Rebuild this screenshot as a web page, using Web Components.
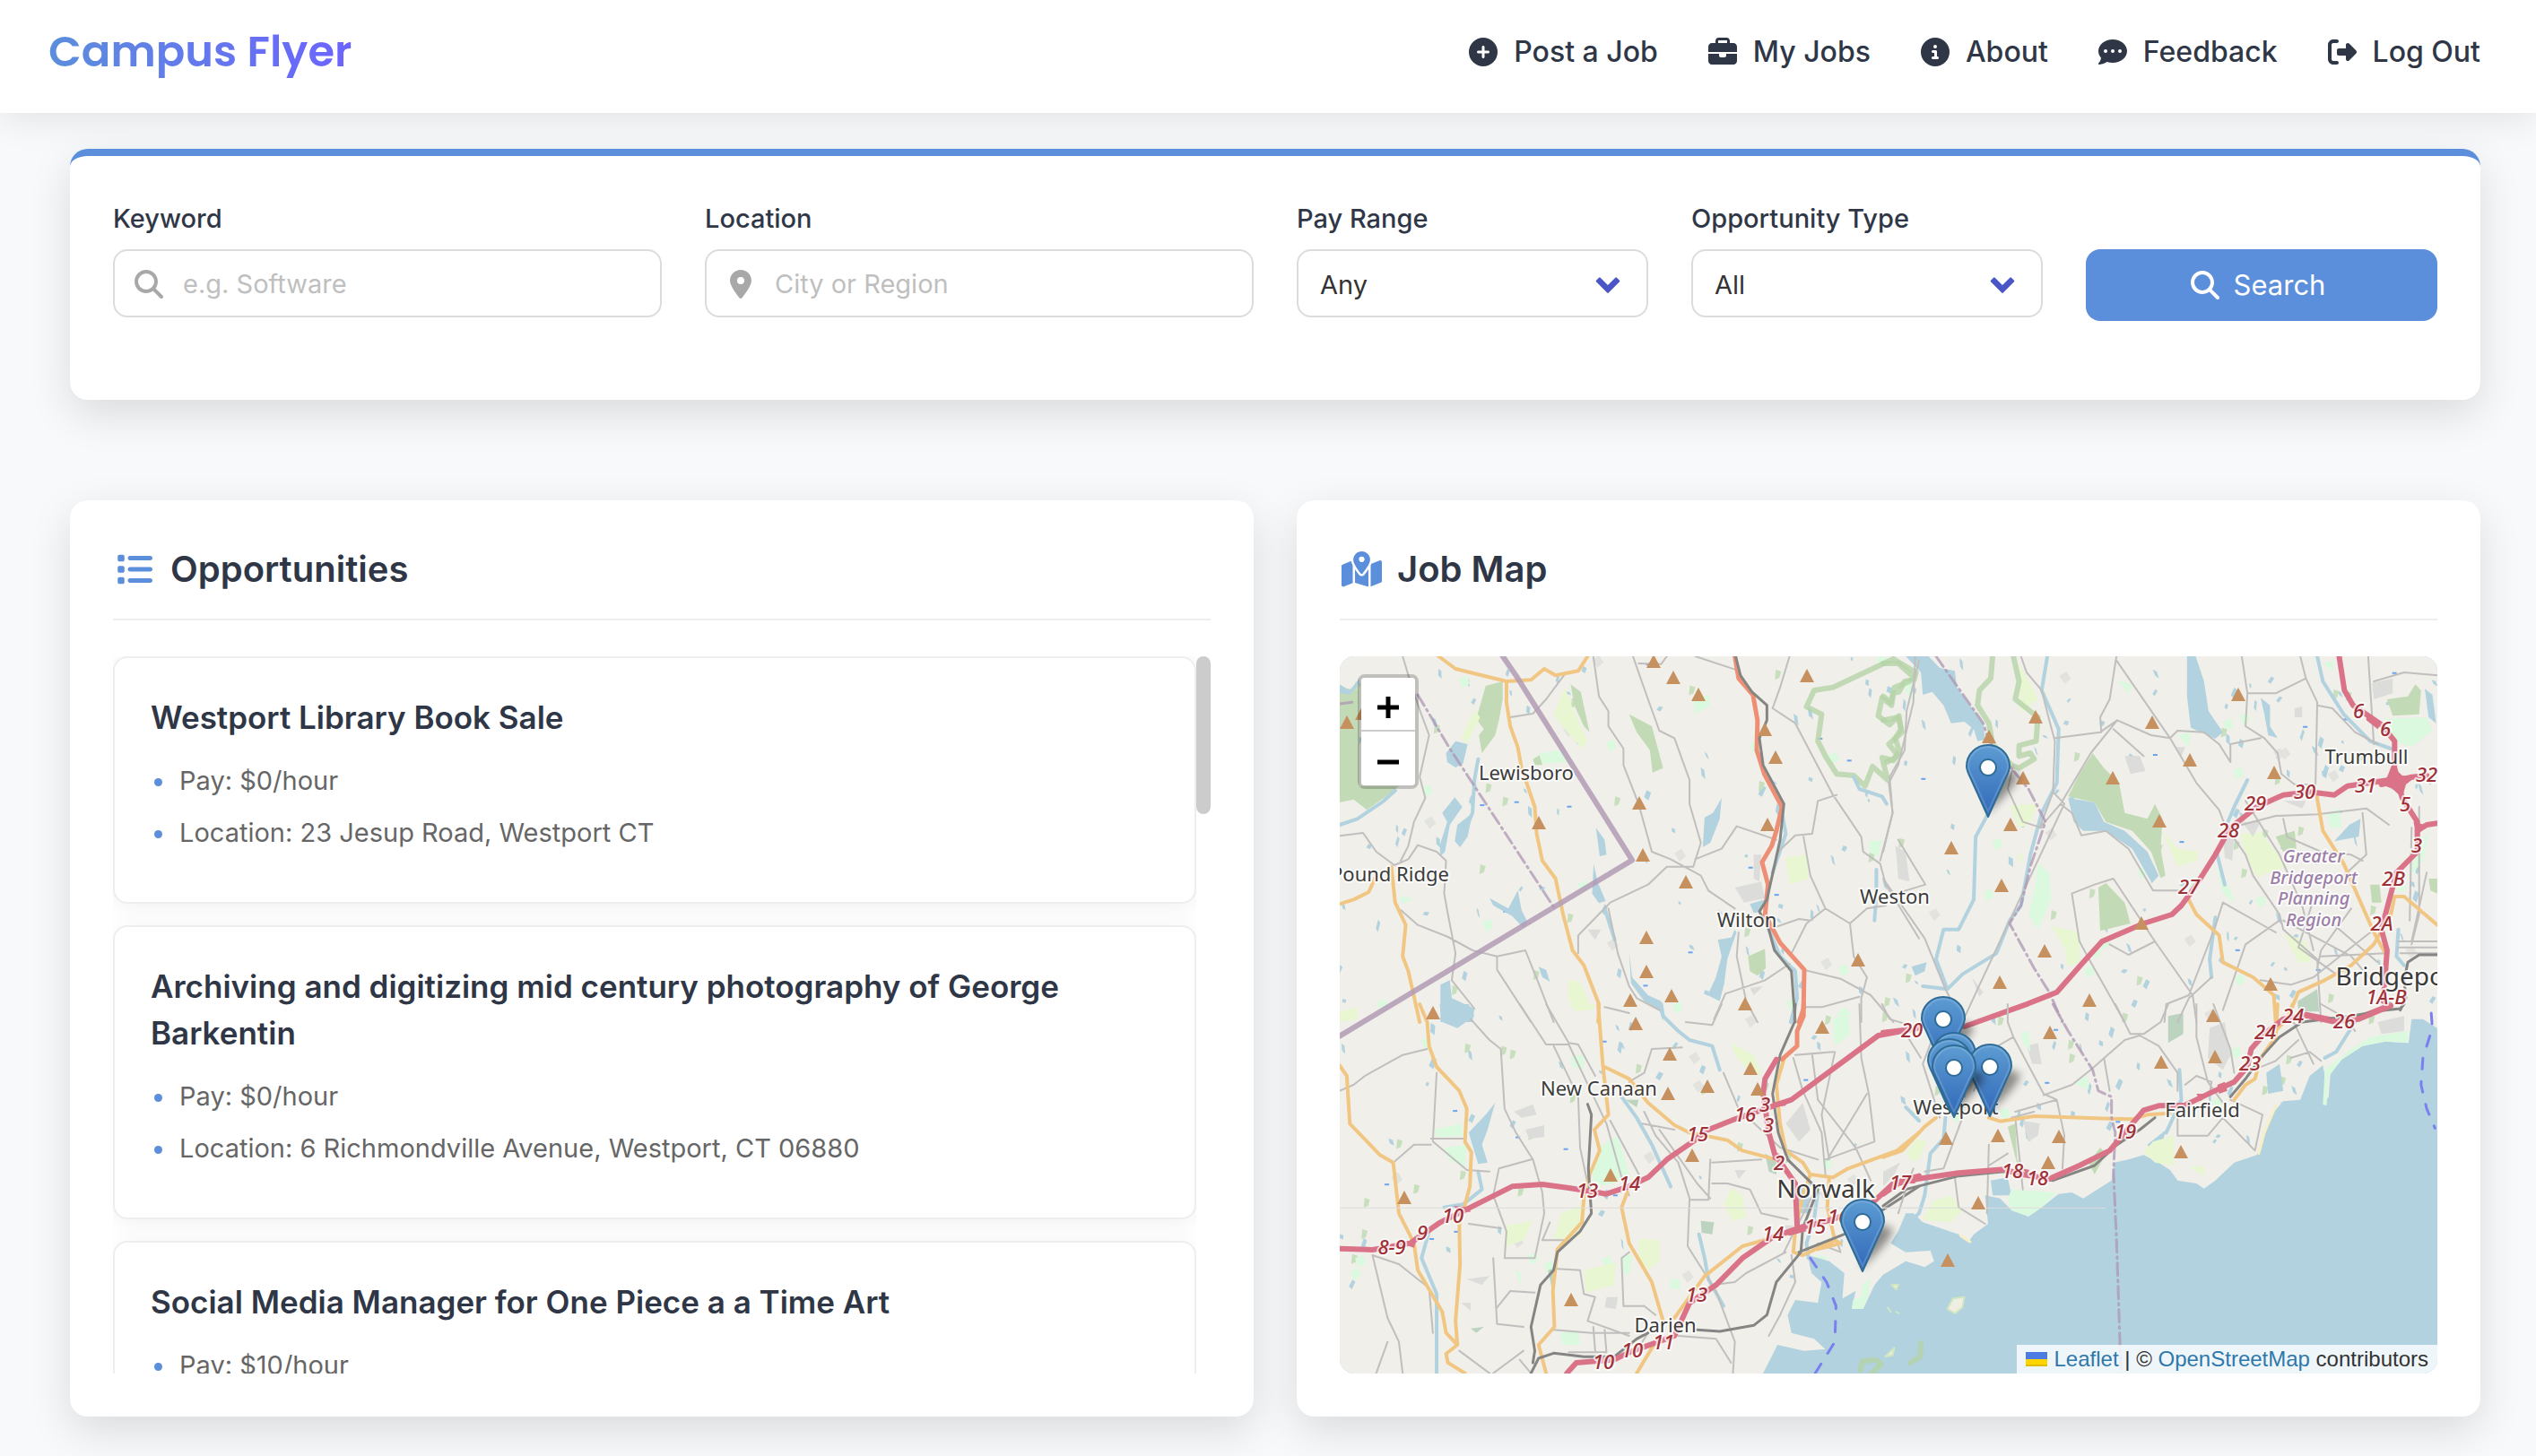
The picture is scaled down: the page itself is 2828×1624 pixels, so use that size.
<!DOCTYPE html>
<html lang="en">
<head>
<meta charset="utf-8">
<title>Campus Flyer</title>
<style>
  html { background: #f8f9fb; }
  body { margin: 0; font-family: Inter, "Liberation Sans", sans-serif; color: #2f3747; }
</style>
</head>
<body>
<cf-app></cf-app>

<script>
const ICONS = {
  plus: [512, 'M256 512A256 256 0 1 0 256 0a256 256 0 1 0 0 512zM232 344V280H168c-13.3 0-24-10.7-24-24s10.7-24 24-24h64V168c0-13.3 10.7-24 24-24s24 10.7 24 24v64h64c13.3 0 24 10.7 24 24s-10.7 24-24 24H280v64c0 13.3-10.7 24-24 24s-24-10.7-24-24z'],
  briefcase: [512, 'M184 48H328c4.400 0 8 3.600 8 8V96H176V56c0-4.400 3.600-8 8-8zm-56 8V96H64C28.700 96 0 124.700 0 160v96H512V160c0-35.300-28.700-64-64-64H384V56c0-30.900-25.100-56-56-56H184c-30.900 0-56 25.100-56 56zM512 288H320v32c0 17.700-14.300 32-32 32H224c-17.700 0-32-14.300-32-32V288H0V416c0 35.300 28.700 64 64 64H448c35.300 0 64-28.700 64-64V288z'],
  info: [512, 'M256 512A256 256 0 1 0 256 0a256 256 0 1 0 0 512zM216 336h24V272H216c-13.3 0-24-10.7-24-24s10.7-24 24-24h48c13.3 0 24 10.7 24 24v88h8c13.3 0 24 10.7 24 24s-10.7 24-24 24H216c-13.3 0-24-10.7-24-24s10.7-24 24-24zm40-208a32 32 0 1 1 0 64 32 32 0 1 1 0-64z'],
  comment: [512, 'M256 448c141.4 0 256-93.1 256-208S397.4 32 256 32S0 125.1 0 240c0 45.1 17.7 86.8 47.7 120.9c-1.9 24.5-11.4 46.3-21.4 62.9c-5.5 9.2-11.1 16.6-15.2 21.6c-2.1 2.5-3.7 4.4-4.9 5.7c-.6 .6-1 1.1-1.3 1.4l-.3 .3c-4.6 4.6-5.9 11.4-3.4 17.4c2.5 6 8.3 9.9 14.8 9.9c28.7 0 57.6-8.9 81.6-19.3c22.9-10 42.4-21.9 54.3-30.6c31.8 11.5 67 17.9 104.100 17.900zM128 208a32 32 0 1 1 0 64 32 32 0 1 1 0-64zm128 0a32 32 0 1 1 0 64 32 32 0 1 1 0-64zm96 32a32 32 0 1 1 64 0 32 32 0 1 1 -64 0z'],
  logout: [512, 'M377.9 105.9L500.7 228.7c7.2 7.2 11.3 17.1 11.3 27.3s-4.1 20.1-11.3 27.3L377.9 406.1c-6.4 6.4-15 9.9-24 9.9c-18.7 0-33.9-15.2-33.9-33.9l0-62.1-128 0c-17.7 0-32-14.3-32-32l0-64c0-17.7 14.3-32 32-32l128 0 0-62.1c0-18.7 15.2-33.9 33.9-33.9c9 0 17.6 3.6 24 9.9zM160 96L96 96c-17.7 0-32 14.3-32 32l0 256c0 17.7 14.3 32 32 32l64 0c17.7 0 32 14.3 32 32s-14.3 32-32 32l-64 0c-53 0-96-43-96-96L0 128C0 75 43 32 96 32l64 0c17.7 0 32 14.3 32 32s-14.3 32-32 32z'],
  search: [512, 'M416 208c0 45.9-14.9 88.3-40 122.7L502.6 457.4c12.5 12.5 12.5 32.8 0 45.3s-32.8 12.5-45.3 0L330.7 376c-34.4 25.2-76.8 40-122.7 40C93.1 416 0 322.900 0 208S93.100 0 208 0S416 93.100 416 208zM208 352a144 144 0 1 0 0-288 144 144 0 1 0 0 288z'],
  pin: [384, 'M215.7 499.2C267 435 384 279.4 384 192C384 86 298 0 192 0S0 86 0 192c0 87.4 117 243 168.3 307.2c12.3 15.3 35.1 15.3 47.4 0zM192 128a64 64 0 1 1 0 128 64 64 0 1 1 0-128z'],
  list: [512, 'M40 48C26.700 48 16 58.700 16 72v48c0 13.300 10.700 24 24 24H88c13.300 0 24-10.700 24-24V72c0-13.300-10.700-24-24-24H40zM192 64c-17.700 0-32 14.300-32 32s14.300 32 32 32H480c17.700 0 32-14.300 32-32s-14.300-32-32-32H192zm0 160c-17.700 0-32 14.300-32 32s14.300 32 32 32H480c17.700 0 32-14.300 32-32s-14.300-32-32-32H192zm0 160c-17.700 0-32 14.300-32 32s14.300 32 32 32H480c17.700 0 32-14.300 32-32s-14.300-32-32-32H192zM16 232v48c0 13.300 10.700 24 24 24H88c13.300 0 24-10.700 24-24V232c0-13.300-10.700-24-24-24H40c-13.300 0-24 10.700-24 24zM40 368c-13.300 0-24 10.700-24 24v48c0 13.300 10.700 24 24 24H88c13.300 0 24-10.700 24-24V392c0-13.300-10.700-24-24-24H40z'],
  map: [576, 'M408 120c0 54.6-73.1 151.9-105.2 192c-7.7 9.6-22 9.6-29.6 0C241.1 271.9 168 174.6 168 120C168 53.7 221.7 0 288 0s120 53.7 120 120zm8 80.4c3.5-6.9 6.7-13.8 9.6-20.6c.5-1.2 1-2.5 1.5-3.7l116-46.4C558.9 123.4 576 135 576 152V422.8c0 9.8-6 18.6-15.1 22.3L416 503V200.4zM137.6 138.3c2.4 14.1 7.2 28.3 12.8 41.5c2.9 6.8 6.1 13.7 9.6 20.6V451.8L32.9 502.7C17.1 509 0 497.4 0 480.4V209.6c0-9.8 6-18.6 15.1-22.3l122.6-49zM327.8 332c13.9-17.4 35.7-45.7 56.2-77V504.3L192 449.4V255c20.5 31.3 42.3 59.6 56.2 77c20.5 25.6 59.1 25.6 79.6 0zM288 152a40 40 0 1 0 0-80 40 40 0 1 0 0 80z'],
  chevron: [512, 'M34 166L86 114Q100 100 114 114L256 256L398 114Q412 100 426 114L478 166Q490 180 478 194L270 402Q256 414 242 402L34 194Q22 180 34 166Z']
};

function define(name, markup, setup) {
  const template = document.createElement('template');
  template.innerHTML = markup;
  customElements.define(name, class extends HTMLElement {
    constructor() {
      super();
      this.attachShadow({ mode: 'open' }).append(template.content.cloneNode(true));
    }
    connectedCallback() {
      if (setup && !this.ready) { this.ready = true; setup(this, this.shadowRoot); }
    }
  });
}

/* Puts the icon named by the host's "icon" attribute in place of the <i> in its shadow root. */
function placeIcon(host, root) {
  const icon = document.createElement('cf-icon');
  icon.setAttribute('name', host.getAttribute('icon'));
  root.querySelector('i').replaceWith(icon);
}

define('cf-icon', `
  <style>
    :host { display: inline-flex; flex: none; justify-content: center; height: var(--size, 32px); }
    svg { height: 100%; width: auto; fill: currentColor; display: block; }
  </style>
  <svg aria-hidden="true"><path fill-rule="evenodd"/></svg>`,
  (host, root) => {
    const [width, d] = ICONS[host.getAttribute('name')];
    root.querySelector('svg').setAttribute('viewBox', `0 0 ${width} 512`);
    root.querySelector('path').setAttribute('d', d);
  });

define('cf-nav-link', `
  <style>
    :host { display: block; }
    a { display: flex; align-items: center; gap: 18px; color: inherit; text-decoration: none;
        font-size: 32px; font-weight: 500; line-height: 48px; white-space: nowrap; }
  </style>
  <a href="#"><i></i><slot></slot></a>`, placeIcon);

define('cf-header', `
  <style>
    :host { display: block; }
    header { display: flex; align-items: center; justify-content: space-between;
      padding: 8px 62px 18px 54px; height: 100px; background: #fff;
      box-shadow: 0 4px 40px rgba(0,0,0,.1); }
    .brand { font-family: Poppins, Inter, sans-serif; font-size: 48px; font-weight: 600; line-height: 60px;
      text-decoration: none; color: transparent;
      background: linear-gradient(90deg, #5b8edb, #6c63ff); background-clip: text; -webkit-background-clip: text; }
    nav { display: flex; gap: 56px; }
  </style>
  <header>
    <a class="brand" href="#">Campus Flyer</a>
    <nav>
      <cf-nav-link icon="plus">Post a Job</cf-nav-link>
      <cf-nav-link icon="briefcase">My Jobs</cf-nav-link>
      <cf-nav-link icon="info">About</cf-nav-link>
      <cf-nav-link icon="comment">Feedback</cf-nav-link>
      <cf-nav-link icon="logout">Log Out</cf-nav-link>
    </nav>
  </header>`);

const FIELD_CSS = `
  :host { display: block; min-width: 0; margin-bottom: 4px; }
  label { display: block; margin-bottom: 12px; font-size: 29px; font-weight: 500; line-height: 44px; white-space: nowrap; }
  .box { box-sizing: border-box; height: 76px; border: 2px solid #dcdcdc; border-radius: 16px; background: #fff; }`;

define('cf-text-field', `
  <style>${FIELD_CSS}
    .box { display: flex; align-items: center; gap: 14px; padding: 2px 22px 0 14px; }
    cf-icon { width: 48px; color: #a8a8a8; }
    input { flex: 1; min-width: 0; padding: 0; border: 0; outline: 0; background: none; color: #333; font: 29px/44px Inter, sans-serif; }
    input::placeholder { color: #bfbfbf; opacity: 1; }
  </style>
  <label for="control"></label>
  <div class="box"><i></i><input id="control" type="text"></div>`,
  (host, root) => {
    root.querySelector('label').textContent = host.getAttribute('label');
    root.querySelector('input').placeholder = host.getAttribute('placeholder');
    placeIcon(host, root);
  });

define('cf-select-field', `
  <style>${FIELD_CSS}
    .stack { display: grid; align-items: center; }
    .stack > * { grid-area: 1 / 1; }
    select { appearance: none; width: 100%; padding: 4px 64px 0 24px; color: #333; font: 29px/44px Inter, sans-serif; }
    cf-icon { --size: 30px; justify-self: end; margin-right: 30px; padding-top: 4px; color: #4a56c6; pointer-events: none; }
  </style>
  <label for="control"></label>
  <div class="stack"><select id="control" class="box"></select><cf-icon name="chevron"></cf-icon></div>`,
  (host, root) => {
    root.querySelector('label').textContent = host.getAttribute('label');
    root.querySelector('select').add(new Option(host.getAttribute('value')));
  });

define('cf-search', `
  <style>
    :host { display: block; }
    form { display: grid; grid-template-columns: repeat(12, minmax(0, 1fr)); gap: 48px; align-items: end;
      margin: 0; padding: 48px 48px 88px; background: #fff; border-top: 8px solid #5b8edb; border-radius: 20px;
      box-shadow: 0 16px 48px rgba(0,0,0,.12); }
    cf-text-field { grid-column: span 3; }
    cf-select-field, button { grid-column: span 2; }
    button { display: flex; align-items: center; justify-content: center; gap: 16px; height: 80px; padding: 0 8px 0 0;
      border: 0; border-radius: 16px; background: #5b8edb; color: #fff; font: 31px/48px Inter, sans-serif; }
  </style>
  <form onsubmit="return false">
    <cf-text-field label="Keyword" placeholder="e.g. Software" icon="search"></cf-text-field>
    <cf-text-field label="Location" placeholder="City or Region" icon="pin"></cf-text-field>
    <cf-select-field label="Pay Range" value="Any"></cf-select-field>
    <cf-select-field label="Opportunity Type" value="All"></cf-select-field>
    <button type="submit"><cf-icon name="search"></cf-icon>Search</button>
  </form>`);

define('cf-panel', `
  <style>
    :host { display: block; padding: 48px; background: #fff; border-radius: 20px; box-shadow: 0 16px 48px rgba(0,0,0,.12); min-width: 0; }
    h2 { display: flex; align-items: center; gap: 16px; margin: 0 0 40px; padding-bottom: 26px; border-bottom: 2px solid #eee;
      font-size: 40px; font-weight: 600; line-height: 58px; }
    cf-icon { --size: 40px; width: 48px; color: #5b8edb; }
  </style>
  <h2><i></i><span></span></h2>
  <slot></slot>`,
  (host, root) => {
    root.querySelector('span').textContent = host.getAttribute('heading');
    placeIcon(host, root);
  });

define('cf-job', `
  <style>
    :host { display: block; padding: 40px 40px 42px; border: 2px solid #eee; border-radius: 16px; background: #fff; box-shadow: 0 4px 24px rgba(0,0,0,.06); }
    h3 { margin: 0 0 22px; font-size: 35px; font-weight: 600; line-height: 52px; }
    ul { list-style: none; margin: 0; padding: 0; color: #666; font-size: 29px; line-height: 46px; }
    li { display: flex; align-items: center; gap: 19px; margin-bottom: 12px; }
    li::before { content: ""; flex: none; width: 9px; height: 9px; margin: 3px 0 0 4px; border-radius: 50%; background: #5b8edb; }
  </style>
  <h3></h3>
  <ul><li><span class="pay"></span></li><li><span class="place"></span></li></ul>`,
  (host, root) => {
    root.querySelector('h3').textContent = host.getAttribute('heading');
    root.querySelector('.pay').textContent = 'Pay: ' + host.getAttribute('pay');
    root.querySelector('.place').textContent = 'Location: ' + host.getAttribute('place');
  });

define('cf-job-list', `
  <style>
    :host { display: flex; height: 800px; }
    .list { flex: 1; min-width: 0; overflow: hidden; display: flex; flex-direction: column; gap: 24px; }
    ::slotted(*) { flex: none; }
    .rail { flex: none; width: 16px; }
    .thumb { height: 22%; border-radius: 8px; background: #ccc; }
  </style>
  <div class="list"><slot></slot></div>
  <div class="rail"><div class="thumb"></div></div>`);

/* Map artwork: each sheet has its own drawing units, laid on the same canvas. */
const SHEETS = [
 { at: [1480, 720], art: `
  <path class="f" d="M33,140L85,150 85,470 190,470 150,510 105,550 70,515 33,525Z"/>
  <path class="w" d="M33,130L60,150 85,110 85,130 60,165 33,160ZM315,360L340,320 372,330 360,395 340,408 318,390ZM305,560L338,508 358,540 325,600 312,690 300,705 298,670 318,590ZM345,600L385,560 372,640 352,675 338,655ZM712,610L735,650 740,700 722,705ZM1000,575L1022,560 1045,510 1040,580 1015,660 995,675ZM706,730L716,790 738,855 720,862 702,830ZM430,845L480,880 505,820 515,885 530,925 520,945 490,905 440,870ZM1035,985L1080,975 1060,1050 1052,1130 1040,1190 1008,1170 1030,1110 1045,1040ZM300,1135L325,1120 330,1180 390,1215 385,1260 300,1260ZM560,1075L580,1085 590,1125 570,1110ZM1120,865L1160,850 1150,890 1130,895ZM800,1025L808,1110 850,1170 885,1190 890,1260 880,1220 840,1190 805,1130Z"/>
  <path class="f" d="M420,135L465,120 465,180 455,250 445,300 410,360 402,300 415,280 395,245ZM645,130L672,155 695,290 680,270 655,200ZM800,230L860,270 890,410 862,425 855,350 820,290ZM1115,1040L1160,1015 1162,1080 1140,1105 1120,1090ZM545,380L565,365 570,400 550,400Z"/>
  <path class="g" d="M390,215L405,240 370,330 355,310ZM630,140L650,210 690,320 675,345 630,280 600,230ZM1215,710L1270,700 1275,780 1225,800ZM640,1120L670,1125 700,1215 660,1225 638,1180ZM33,1225L80,1210 80,1250 33,1260Z"/>
  <path class="p" d="M560,360L620,350 635,390 570,395ZM970,185L1010,165 1015,200 975,230ZM1435,655L1470,650 1460,705 1435,690ZM190,840L230,845 200,865ZM1345,1240L1370,1210 1390,1235ZM1530,125L1550,120 1550,180 1535,160Z"/>
  <path class="u" d="M1080,810L1150,790 1160,845 1105,860ZM1505,670L1530,690 1540,780 1515,780ZM690,950L725,950 710,985ZM1120,1145L1155,1140 1130,1170ZM1130,700L1150,700 1145,790 1130,780Z"/>
  <path class="park" d="M1500,45L1560,90 1555,115 1530,120 1515,155 1500,160 1495,200 1470,175 1460,235 1490,265 1515,235 1520,280 1505,310 1515,350 1500,385 1470,375 1485,450 1445,405 1425,470 1395,435 1350,430 1320,370 1300,320 1310,230 1270,205 1290,150 1340,140 1500,45"/>
  <path class="s" d="M33,600L80,580 150,520 180,485M400,380L390,450 385,560 365,620M735,880L762,985M1395,440L1410,480 1470,505 1482,530M1205,560L1215,630 1180,760M1170,950L1200,1040 1240,1090 1245,1180 1228,1260M1455,750L1455,830 1450,920"/>
  <path class="r" d="M200,36L215,100 245,215 270,300 245,440 260,510 230,590 215,670 195,720M33,637L95,627 130,690 178,735 215,715 240,668 290,690 315,720 310,830 320,900 340,1030 330,1120 390,1215M195,885L240,935 320,975 385,1020 450,1040 525,1020 560,1130 600,1260M450,1040L450,1085 540,1260M705,36L720,170 745,220 745,270 785,345 785,400 825,530 860,690 910,715 990,770 1010,820 1080,880M810,36L850,180 880,285 920,310 960,450 960,530 990,660 970,740 900,740 850,800 750,860 665,970 665,1030M745,880L770,1030 800,1140 820,1180 880,1220M975,36L1080,80M825,60L885,62 900,36M1225,36L1200,140 1180,210 1240,260 1340,500 1415,640 1420,690 1465,730 1480,800 1568,980M1350,500L1300,520 1285,630 1240,635 1195,690M1085,605L1045,680 975,715M1085,605L1190,650M1262,640L1280,770 1320,880 1270,930 1230,1030M1320,880L1385,930 1430,880 1480,870M1385,930L1395,1040 1430,1110 1415,1180 1415,1260M1262,1085L1360,1115 1440,1170 1500,1260M1225,1065L1160,1120 1055,1165 1025,1250M1568,50L1535,220 1530,350 1490,440 1498,560 1465,720M1090,960L1085,1040 1110,1190 1140,1260M1262,1210L1310,1210 1410,1175M485,240L545,228 580,180 630,95M1170,950L1250,915 1280,920"/>
  <path class="o" d="M295,36L340,78 475,120 540,115 575,78 605,100 665,85 690,36M475,120L475,190 485,270 505,340 515,410 550,540 555,630 570,720 605,780 625,900 650,1020 680,1070 720,1200 718,1260M170,740L180,860 208,935 200,1040 215,1090 245,1260M130,770L110,825 70,850 33,865"/>
  <path class="t" d="M1080,36L1090,110 1128,165 1140,250 1138,350 1158,430 1205,540 1190,620 1178,670 1152,725 1168,800 1160,900 1200,995 1264,1085 1262,1215 1250,1260"/>
  <path class="l" d="M1082,36L1095,100 1125,155 1165,200 1165,250 1145,310 1155,400 1210,530 1200,650 1165,850 1145,890 1170,950 1185,1020 1230,1090 1240,1260"/>
  <path class="bd" d="M240,165L325,345 600,875M33,195L75,188"/>
  <path class="b" d="M465,36L500,100 808,718 33,1307"/>
 `},
 { at: [2100, 720], art: `
  <path class="w" d="M60,36L120,36 150,75 190,85 195,140 265,260 270,315 250,320 240,280 215,255 180,260 160,200 130,155 105,165 100,90ZM805,36L828,36 850,120 862,220 900,290 880,312 815,275 805,170ZM1000,175L1025,200 1025,270 1045,310 1020,300 1010,230ZM490,510L560,525 585,590 640,620 700,690 730,770 712,795 660,680 590,620 530,620 505,590ZM75,1075L115,1060 110,1090 85,1105ZM1195,655L1235,600 1265,580 1260,640ZM1435,145L1455,165 1465,260 1445,240Z"/>
  <path class="f" d="M555,360L585,410 625,460 640,560 700,580 720,530 740,580 735,680 748,770 735,778 710,690 660,620 590,590 560,525 490,505 520,430ZM570,810L590,795 640,860 655,930 575,955ZM1335,180L1390,170 1410,130 1425,150 1420,230 1350,235ZM1040,640L1090,620 1095,680 1060,690ZM1445,780L1468,780 1468,830 1450,820ZM1290,800L1315,800 1320,860 1295,860Z"/>
  <path class="d" d="M1098,1190L1150,1150 1155,1225 1100,1225Z"/>
  <path class="g" d="M360,60L395,140 410,180 365,225ZM335,535L410,530 385,600 360,610ZM740,620L780,680 835,690 830,720 780,740ZM945,630L1000,625 1070,740 990,775 960,700ZM1060,960L1120,990 1135,1060 1100,1060ZM445,940L520,960 520,1060 490,1075 480,1010ZM355,700L370,700 365,735Z"/>
  <path class="p" d="M410,730L440,760 445,850 410,950 385,900 400,820ZM1330,245L1440,240 1455,285 1400,340 1340,310ZM620,115L660,130 650,160ZM885,740L925,830 930,860 900,830ZM1420,650L1445,630 1430,720 1390,780ZM1165,60L1195,50 1190,85ZM55,120L80,120 75,180ZM780,300L815,290 810,340ZM1175,560L1210,545 1215,610 1185,610Z"/>
  <path class="u" d="M640,370L680,370 695,420 655,430ZM1295,125L1350,110 1350,160 1300,180ZM900,640L930,640 925,720 905,710ZM35,690L60,700 70,790 40,780ZM1060,520L1120,520 1110,545ZM235,1110L265,1160 255,1175ZM950,590L1000,590 980,640ZM775,340L800,340 790,370ZM1090,210L1110,205 1110,240 1090,240Z"/>
  <path class="park" d="M0,60L40,60 80,105 70,120 30,140 20,190 0,170M0,250L40,240 50,290 15,330 40,370 10,390M290,36L285,110 255,150 250,200 280,260 290,330 340,400 360,410 400,380 390,360 360,370 360,335 405,320 410,240 380,210 350,180 360,120 345,36"/>
  <path class="s" d="M435,36L420,150 465,280 460,460 420,560 390,700 365,870 335,920 300,1030 210,1100 170,1150 140,1050 160,950 200,950 240,850 245,640 275,570M1150,36L1165,120 1220,230 1290,320 1345,345M965,450L930,540 910,600M885,700L905,800M880,910L865,1050 870,1110M1365,950L1360,1040 1380,1070M170,1150L105,1140"/>
  <path class="r" d="M85,36L80,190 40,400 15,460 25,560 0,690M365,36L380,90 420,150 440,250 455,320 450,490 415,610 470,530 550,360 620,250 575,290 455,310M618,36L600,180 575,240 578,290M618,50L700,200 760,310 830,460 890,550 905,600 960,700 980,770 1050,900 1060,950 1150,1050 1160,1260M620,250L710,300 760,310 780,285 850,290 890,330 920,390M950,36L965,160 960,270 1010,310 1045,360 1055,430 1090,465 1145,465M965,160L1040,160 1120,110M1105,36L1120,110 1150,190 1145,490M1285,36L1300,330M1150,200L1190,210 1250,290 1310,330M1300,120L1380,90 1468,100M920,390L920,330 1000,310M470,530L500,560 525,635 590,620 650,680 715,820 800,820M500,830L560,800 610,780 720,990 820,1170 830,1260M500,830L520,990 550,1060 640,1260M720,990L650,1035 600,1000M0,780L110,980 165,1150 210,1260M40,650L112,800 20,835M420,610L370,590 330,480 345,400M450,490L480,530 250,1150 210,1260M610,280L690,370M950,600L1040,570 1150,565 1280,545 1340,600M960,520L1050,700 1110,870 1140,1020M1060,580L1070,640 1160,690 1240,700 1270,720M1270,560L1280,700 1220,770M1060,920L1240,1040 1300,1130M1040,960L900,860 880,940 810,1170 750,1200 745,1260M1420,540L1420,900 1400,1000M1400,610L1395,920M1365,990L1468,990M1365,1010L1468,1010M1370,1030L1468,1030M1440,760L1400,990M1160,1040L1330,1030M1140,850L1100,1010 1200,1100M1240,880L1160,1020 1150,1080M1000,1120L1080,1135 1140,1110 1300,950M900,1220L960,1000 1050,920M1190,930L1310,1060M870,1110L810,1180 780,1260"/>
  <path class="o" d="M1148,500L1165,620 1220,730 1300,960 1330,1030M805,840L830,900 890,970 900,1060 980,1110 1035,1170 1040,1260M1468,935L1380,840 1355,840 1345,900 1300,1000 1240,1070 1170,1120 1100,1160 1080,1220 1085,1260"/>
  <path class="l" d="M1468,1035L1420,1035 1390,1060 1380,1120 1385,1180 1370,1220"/>
  <path class="bd" d="M140,36L265,260 280,320 385,480 430,590 390,740 365,870 335,930 400,1080 440,1160 475,1260"/>
  <path class="m" d="M1208,36L1222,150 1245,200 1320,265 1355,320 1355,400M1320,465L1400,440 1440,435M1355,400L1340,450 1230,470 1195,500 1130,490 1060,500 990,540 920,610 880,700 825,810 790,870 765,900 690,930 580,990 530,1060 460,1160 385,1198 215,1275M1355,410L1375,510 1415,590 1415,690 1360,760 1320,950 1335,1020 1325,1190M1415,620L1440,600 1468,595M1120,1235L1200,1255 1250,1250 1340,1205"/>
  <path class="mf" d="M1350,405L1375,435 1410,440 1385,465 1375,510 1350,480 1315,462 1335,440ZM1405,590L1435,600 1415,640ZM1280,230L1320,260 1310,280 1280,250Z"/>
 `},
 { at: [1480, 1120], art: `
  <path class="w" d="M298,0L375,0 390,40 345,80 305,60ZM420,370L445,330 425,420 410,470 425,530 400,535 375,430ZM1245,610L1280,600 1275,700 1250,700Z"/>
  <path class="p" d="M700,560L720,480 770,440 800,570 760,600 710,610ZM1340,50L1380,30 1385,100 1345,140ZM285,420L355,400 360,440 290,445ZM310,480L370,470 365,545 320,520ZM645,175L680,170 680,215 650,210ZM615,1100L665,1090 670,1140 625,1140ZM910,920L935,920 935,955 908,950ZM1290,840L1325,845 1310,880ZM780,840L810,840 800,905 785,900ZM500,890L515,900 510,945Z"/>
  <path class="g" d="M620,700L680,670 670,780 600,785ZM1070,615L1100,640 1110,715 1075,725 1050,670ZM825,785L880,790 880,860 850,890 825,860ZM680,890L765,865 760,940 685,965ZM475,740L545,725 520,790 475,810ZM1070,130L1130,170 1150,230 1130,240 1080,170ZM640,0L715,0 700,20 660,20Z"/>
  <path class="d" d="M990,725L1025,730 1020,770 992,765ZM380,1085L415,1080 395,1100ZM585,890L600,885 595,950ZM790,320L825,320 820,345ZM1160,500L1190,520 1190,570 1170,560Z"/>
  <path class="u" d="M495,360L545,335 555,370 515,380ZM525,420L575,405 575,445 535,450ZM1215,400L1260,330 1280,420 1250,460ZM370,920L430,910 410,940ZM1080,555L1110,555 1090,585ZM740,980L770,980 765,1020 735,1015ZM1210,740L1235,740 1230,780ZM355,1000L380,1000 380,1025Z"/>
  <path class="s" d="M885,0L890,40 930,90 960,120 1020,140 1040,220M780,310L820,380 860,470 910,610M270,760L250,850 290,970 290,1235M400,560L410,620 360,670 310,680M985,770L1000,850 1010,920 1050,1010M1300,630L1290,720 1270,800 1275,850"/>
  <path class="r" d="M380,50L430,120 460,150 470,350 500,430 545,520 570,630 575,700 550,850 470,850 475,760 440,640 455,550 545,518M510,0L580,135 640,135 740,400 780,580 800,640M580,0L640,130 665,135 710,240M600,140L665,310 670,480 690,600M33,290L70,270 100,240 200,170 265,150M290,230L280,460 370,555 430,560M180,525L230,470 275,470M275,450L365,450M840,360L870,440 930,530 960,650 955,810 1030,960 1080,1130 1075,1235M750,390L830,580M835,400L920,420M735,10L770,20 800,30M950,60L1020,70 1045,0M940,145L860,150 840,230 800,260M1050,230L1090,350 1200,480 1300,520M1240,170L1340,160M1235,180L1260,290 1310,430 1320,570M1345,160L1310,370 1330,520M1430,300L1325,520M1285,170L1300,320 1400,480 1440,590M1410,0L1415,180 1435,300 1450,460 1320,520M1470,0L1490,50 1568,80M1020,530L1150,520M960,655L1010,655 1015,520M1020,600L1060,600 1120,620 1150,700 1220,720M1215,830L1110,900 1080,930 1020,940M1230,840L1240,930 1200,1040 1170,1110M120,840L160,1050 190,1130 200,1235M120,840L190,870 270,950 280,1100M375,735L460,750M440,850L450,1070 520,1080M450,1015L485,960 550,965M600,885L670,890 680,970 710,980 690,1060 800,1110M800,830L780,850 785,1010 840,1010 870,1040M930,1110L1030,1120 1070,1200M520,1160L440,1235M740,1165L640,1165M705,1080L710,1160M735,1090L740,1165M600,1090L700,1100 800,1100M850,1100L830,1140M540,1235L510,1190M350,1160L430,1235M590,730L570,790 630,790M130,1235L160,1130M1290,630L1210,830M1350,790L1360,830 1300,800M880,420L980,600 1015,650"/>
  <path class="o" d="M245,0L265,60 270,140 290,210 350,290 370,350 365,460 382,495 378,610 350,740 352,870 340,1060 345,1140 315,1170 320,1200 365,1235M33,205L52,240 60,400 140,505 175,530 190,700 230,800 240,890 305,1030 315,1100 345,1140M718,0L730,200 745,370 708,420 722,490 695,570 680,650 675,730 610,820 598,960 602,1080 560,1140 580,1235M735,210L800,250 850,330 920,405 960,430 1060,455 1100,490 1190,520M795,630L780,680 800,800 860,930 890,1060M1210,185L1190,270 1200,400 1215,490 1260,530 1280,570 1340,580 1380,550 1510,490 1568,430M1280,570L1260,640 1240,760 1100,810 1000,910 920,1050M1330,580L1325,680 1345,790 1260,840 1235,830 1240,760M870,1130L820,1235M1345,790L1360,800 1300,820"/>
  <path class="t" d="M1262,0L1262,40 1245,90 1245,140 1205,185"/>
  <path class="l" d="M1240,0L1238,60 1200,170 1180,300 1195,430 1220,520 1300,620 1260,750 1255,830 1190,930 1165,1040 1130,1075 1040,1095 980,1090M690,335L700,370 692,550 700,700 670,760 610,830 600,890 565,940 540,1080 550,1160 545,1200M540,1235L560,1185 600,1168 680,1180 760,1180 820,1120 850,1100M1250,830L1370,770 1470,690 1568,610"/>
  <path class="tile" d="M33,682H1568"/>
  <path class="m" d="M33,818L120,822 220,800 300,730 380,680 490,610 570,603 640,615 740,635 800,610 850,580 900,520 980,450 1000,425 1080,385 1160,350 1230,320 1460,105 1568,80M1190,185L1160,250 1155,300 1170,430 1185,500 1240,600 1245,740M635,1235L660,1200 710,1195 760,1190 800,1165 920,1110 960,1000 1030,940 1100,850 1180,780 1250,750 1340,720 1440,670 1500,600 1568,575"/>
  <path class="mf" d="M335,675L375,680 380,695 350,695ZM1180,490L1210,510 1205,530 1180,520ZM1205,760L1260,735 1270,760 1225,775ZM1180,330L1215,320 1215,340 1185,345ZM205,805L240,770 230,815Z"/>
 `},
 { at: [2100, 1120], art: `
  <path class="f" d="M545,530L575,480 590,500 560,570ZM330,410L350,400 355,520 375,560 360,560Z"/>
  <path class="d" d="M755,40L795,30 795,100 755,130Z"/>
  <path class="u" d="M865,80L905,60 920,170 900,220 860,180ZM370,390L415,400 410,440 385,460ZM380,140L410,130 420,200 395,200ZM0,560L45,530 30,570 0,610ZM1310,60L1380,40 1380,90 1320,100Z"/>
  <path class="s" d="M165,380L160,450 125,500 110,640 95,700 60,740M60,345L95,390M785,220L790,320 750,430M1250,60L1200,160 1170,180"/>
  <path class="w" d="M1468,80L1430,50 1400,50 1392,130 1330,125 1270,140 1215,185 1185,235 1180,310 1168,340 1170,240 1165,205 1130,240 1105,320 1060,325 1035,360 1010,430 990,505 930,530 880,590 850,617 830,600 780,590 760,555 730,530 690,505 650,520 612,530 605,590 530,650 500,630 465,635 420,680 385,710 340,690 310,650 270,640 278,735 240,770 225,797 200,770 105,730 80,700 60,700 40,760 20,800 60,830 125,825 135,860 110,880 60,860 0,905 -23,940 -53,1020 -83,1020 -73,960 -108,985 -103,900 -143,860 -200,840 -190,900 -163,930 -173,1000 -233,990 -253,1040 -243,1100 -183,1120 -153,1155 -210,1160 -280,1140 -320,1240 1470,1240ZM285,590L330,580 340,640 290,640ZM1015,230L1050,200 1060,290 1020,300ZM700,470L750,420 740,460 715,500Z"/>
  <path class="p" d="M340,620L460,630 420,680 385,710 340,690 330,650ZM1290,110L1390,90 1390,130 1330,125 1270,140 1215,185 1180,240 1175,340 1165,335 1170,220 1230,160ZM505,265L540,240 545,285ZM365,95L385,90 390,160 370,130ZM-55,940L-35,920 -40,980 -55,1020 -83,1020 -80,990 -58,980Z"/>
  <path class="g" d="M105,720L130,660 180,640 210,690 180,730 130,725ZM690,495L715,460 770,440 770,540 720,530ZM60,500L90,450 115,460 95,520 75,525ZM810,545L850,540 850,575Z"/>
  <path class="sand" d="M1040,340L1010,430 995,500M230,795L205,775"/>
  <path class="isle" d="M170,1020L185,985 215,980 210,1015 190,1035ZM22,940L40,938 35,955ZM5,1180L30,1150 25,1175ZM12,1015L20,1030M35,1030L42,1035"/>
  <path class="park" d="M-60,1225L-55,1195 -20,1190 -5,1205 -30,1235M100,1135L98,1180 72,1200"/>
  <path class="r" d="M165,0L105,200 150,380M330,0L330,60 345,110 425,300 460,320 480,440 475,550M345,110L290,150 240,290M425,305L500,270 550,220 640,120 680,105 730,140 780,230 780,290M755,0L735,60 690,100 655,100 615,0M830,0L830,110 860,260 900,330M900,380L860,440 780,440 780,340M900,380L985,490 1005,370 920,320M875,0L920,150 930,230M350,380L370,620M210,380L160,550 110,560M280,470L275,700M330,500L280,540M190,580L200,680 270,735M400,360L340,380M585,180L600,290M80,550L60,620 40,700M1080,40L1140,200M1100,120L1040,190 980,220M800,270L830,240 870,260 865,300M1080,180L1130,160 1160,190M60,100L100,180M1160,0L1230,50 1250,90M460,320L350,360"/>
  <path class="o" d="M0,512L50,490 110,410 140,380M280,380L310,392 400,375 600,383 660,385 700,370 760,365M930,320L960,270 985,250 1000,180 1040,110 1045,0M1085,0L1070,50 1030,100"/>
  <path class="l" d="M1380,0L1370,15 1330,20 1240,40 1110,60 1050,110 1000,180 960,250 920,310M720,380L680,420 620,470 560,540 450,590 380,575 320,560 200,575 60,620 0,675"/>
  <path class="tile" d="M0,682H588"/>
  <path class="bd" d="M450,0L490,90 555,220 570,290 605,310 605,380 615,430 610,560 618,780 622,930 630,1235"/>
  <path class="m" d="M0,95L70,85M0,635L40,600 90,585 200,565 320,553 370,570 440,585 520,540 600,490 640,430 690,355 730,340 800,338 870,295 930,260 965,210 975,150 1010,100 1060,50 1120,38 1190,58 1260,50 1345,5"/>
  <path class="mf" d="M885,270L905,260 912,290 890,300ZM830,300L870,300 840,325ZM70,570L88,570 84,600 68,600ZM370,550L388,555 380,570Z"/>
  <path class="ferry" d="M1452,30L1455,80 1430,180 1425,270 1440,350 1462,415M-193,850L-150,930 -125,1010 -128,1130 -180,1235"/>
 `}
];
const PEAKS = [
  [1480, 720, '865,75 917,130 984,185 1272,123 1160,303 1187,395 827,550 560,615 836,723 950,813 1167,622 845,998 845,1112 803,1208 912,1195 1107,1220 1406,1075 280,1250 52,280 92,250'],
  [2100, 720, '940,185 403,262 280,328 713,280 813,405 1036,447 608,465 370,465 731,610 337,622 180,700 313,825 684,950 427,1045 309,1148 546,1208 1026,1155 874,1260'],
  [1480, 1120, '817,87 907,188 1311,98 1121,236 1007,297 902,320 1140,307 968,528 750,595 204,668 646,1012'],
  [2100, 1120, '442,117 879,197 736,215 167,470 305,463 466,465 789,515 437,553 252,688 171,880']
];
const TOWNS = [['Lewisboro', 1702, 870], ['Pound Ridge', 1550, 983], ['Wilton', 1948, 1034], ['Weston', 2113, 1008],
  ['Trumbull', 2639, 852], ['New Canaan', 1783, 1222], ['Darien', 1857, 1486], ['Westport', 2181, 1243], ['Fairfield', 2456, 1246]];
const CITIES = [['Norwalk', 2036, 1336], ['Bridgeport', 2676, 1099]];
const REGION = [['Greater', 2580, 962], ['Bridgeport', 2580, 986], ['Planning', 2580, 1009], ['Region', 2580, 1033]];
const EXITS = [['6', 2630, 801], ['6', 2660, 821], ['32', 2706, 872], ['31', 2638, 884], ['30', 2570, 891], ['29', 2515, 904],
  ['28', 2485, 934], ['5', 2682, 905], ['3', 2695, 951], ['27', 2441, 997], ['2B', 2669, 988], ['2A', 2656, 1038], ['1A-B', 2661, 1120],
  ['24', 2557, 1141], ['26', 2614, 1147], ['24', 2526, 1159], ['23', 2509, 1194], ['19', 2370, 1270], ['18', 2244, 1314], ['18', 2272, 1322],
  ['17', 2119, 1327], ['20', 2132, 1157], ['16', 1946, 1251], ['3', 1968, 1240], ['3', 1972, 1263], ['15', 1893, 1273], ['2', 1984, 1305],
  ['14', 1817, 1328], ['13', 1770, 1336], ['10', 1620, 1364], ['9', 1586, 1383], ['8-9', 1552, 1399], ['14', 1977, 1384], ['15', 2024, 1376],
  ['16', 2050, 1365], ['13', 1892, 1452], ['11', 1855, 1505], ['10', 1820, 1514], ['10', 1788, 1527]];
const PINS = [[2217, 911], [2167, 1192], [2179, 1232], [2174, 1239], [2219, 1245], [2179, 1246], [2077, 1418]];

define('cf-map', `
  <style>
    :host { display: grid; height: 800px; border-radius: 16px; overflow: hidden; background: #aed1de; }
    .canvas, .zoom, .credit { grid-area: 1 / 1; }
    .canvas { width: 100%; height: 100%; display: block; min-width: 0; min-height: 0; }
    .sheet path { vector-effect: non-scaling-stroke; fill: none; stroke-linejoin: round; stroke-linecap: round; }
    .sheet .w { fill: #b1d2de; } .sheet .f { fill: #c2dab5; } .sheet .g { fill: #e8f6d2; } .sheet .p { fill: #dbf9de; }
    .sheet .d { fill: #bcd3c0; } .sheet .u { fill: #dcdcda; } .sheet .mf { fill: #da7388; } .sheet .isle { fill: #eeeee2; stroke: #cfe6c0; stroke-width: 2; }
    .sheet .park { stroke: #b5d3a8; stroke-width: 6; stroke-opacity: .8; }
    .sheet .s { stroke: #b1d2de; stroke-width: 4; } .sheet .r { stroke: #c0bfbe; stroke-width: 2; }
    .sheet .o { stroke: #f1c682; stroke-width: 4; } .sheet .t { stroke: #ee8e75; stroke-width: 5; }
    .sheet .l { stroke: #858583; stroke-width: 3; } .sheet .m { stroke: #da7388; stroke-width: 6; }
    .sheet .b { stroke: #b29bb5; stroke-width: 6; stroke-opacity: .85; } .sheet .bd { stroke: #ae95b3; stroke-width: 3; stroke-dasharray: 14 5 2 5; stroke-opacity: .75; }
    .sheet .tile { stroke: #dcdcdc; stroke-width: 1; } .sheet .ferry { stroke: #7a80ee; stroke-width: 3; stroke-dasharray: 12 14; }
    .sheet .sand { stroke: #f8efc6; stroke-width: 3; }
    .speck-w { fill: #b1d2de; } .speck-f { fill: #c8dfbd; } .speck-b { fill: #6aa3ee; } .speck-p { fill: #dbf9de; } .speck-u { fill: #e2e2df; }
    .peaks { fill: #c6905f; }
    text { font-family: "Noto Sans", "Open Sans", sans-serif; text-anchor: middle; paint-order: stroke; stroke: #fff; stroke-opacity: .75; stroke-width: 4; stroke-linejoin: round; }
    .town { font-size: 22px; fill: #3c3c3c; } .city { font-size: 28px; fill: #3a3a3a; }
    .region { font-size: 20px; font-style: italic; font-weight: 500; fill: #9c7fa8; } .exit { font-size: 22px; font-style: italic; font-weight: 500; fill: #9e3038; }
    .zoom { align-self: start; justify-self: start; margin: 20px; border: 4px solid rgba(0,0,0,.2); border-radius: 8px; background-clip: padding-box; display: flex; flex-direction: column; z-index: 1; }
    .zoom button { display: flex; align-items: center; justify-content: center; width: 60px; height: 60px; padding: 8px 0 0; border: 0; background: #fff; box-sizing: border-box; }
    .zoom button:first-child { border-bottom: 2px solid #ccc; border-radius: 4px 4px 0 0; } .zoom button:last-child { border-radius: 0 0 4px 4px; }
    .zoom svg { width: 26px; height: 26px; stroke: #000; stroke-width: 5; }
    .credit { align-self: end; justify-self: end; display: flex; align-items: center; white-space: pre; height: 32px; padding: 0 10px; background: rgba(255,255,255,.8);
      font: 24px/32px "Helvetica Neue", "Liberation Sans", sans-serif; color: #333; z-index: 1; }
    .credit a { color: #2f78ac; text-decoration: none; display: flex; align-items: center; gap: 8px; }
    .credit svg { width: 24px; height: 16px; }
  </style>
  <svg class="canvas" viewBox="1494 732 1224 800" preserveAspectRatio="xMidYMid slice" role="img" aria-label="Map of job locations">
    <defs>
      <linearGradient id="pinFill" x1="0" y1="0" x2="0" y2="1"><stop offset="0" stop-color="#5d9cd3"/><stop offset="1" stop-color="#3068b8"/></linearGradient>
      <filter id="soft" x="-50%" y="-50%" width="200%" height="200%"><feGaussianBlur stdDeviation="5"/></filter>
      <g id="pinShape">
        <path d="M0,-2C6,-14 28,-28 34,-46C22,-56 8,-50 4,-40Z" fill="#000" opacity=".42" filter="url(#soft)"/>
        <path d="M0,0L-19,-42C-23,-50 -24,-53 -24,-56C-24,-70 -13,-80 0,-80S24,-70 24,-56C24,-53 23,-50 19,-42Z" fill="url(#pinFill)" stroke="#2e6c97" stroke-width="2" stroke-linejoin="round"/>
        <path d="M0,-6L-17,-43C-21,-50 -22,-53 -22,-56C-22,-68 -12,-78 0,-78S22,-68 22,-56C22,-53 21,-50 17,-43Z" fill="none" stroke="#fff" stroke-opacity=".15" stroke-width="2"/>
        <circle cy="-55" r="9" fill="#fff" stroke="#2e6c97" stroke-width="2"/>
      </g>
    </defs>
    <rect x="1494" y="732" width="1224" height="800" fill="#f0efea"/>
    <g class="specks"></g><g class="sheets"></g><g class="peaks"></g><g class="labels"></g><g class="pins"></g>
  </svg>
  <div class="zoom">
    <button type="button" aria-label="Zoom in"><svg viewBox="0 0 26 26"><path d="M1 13H25M13 1V25"/></svg></button>
    <button type="button" aria-label="Zoom out"><svg viewBox="0 0 26 26"><path d="M1 13H25"/></svg></button>
  </div>
  <div class="credit"><a href="#"><svg viewBox="0 0 24 16" aria-hidden="true"><path fill="#4C7BE1" d="M0 0h24v8H0z"/><path fill="#FFD500" d="M0 8h24v6H0z"/><path fill="#E0BC00" d="M0 14h24v2H0z"/></svg>Leaflet</a> | © <a href="#">OpenStreetMap</a> contributors</div>`,
  (host, root) => {
    const kx = 660 / 1568, ky = 1 / 3;
    const fill = (name, markup) => { root.querySelector(name).innerHTML = markup; };

    let seed = 7;
    const rnd = () => (seed = seed * 16807 % 2147483647) / 2147483647;
    let specks = '';
    for (let i = 0; i < 480; i++) {
      const x = 1494 + rnd() * 1224, y = 732 + rnd() * 700, k = rnd();
      if (y > 1280 && x > 2060) continue;
      if (k < .62) {
        const h = 3 + rnd() * 8, w = 2 + rnd() * 3, s = (rnd() - .6) * 7;
        specks += `<path class="speck-w" d="M${x},${y}l${w},${h * .3}l${s},${h}l${-w},${-h * .4}z"/>`;
      } else if (k < .76) specks += `<path class="speck-f" d="M${x},${y}l6,2l-2,7l-5,2z"/>`;
      else if (k < .84) specks += `<path class="speck-b" d="M${x},${y}h5v2h-5z"/>`;
      else if (k < .93) specks += `<path class="speck-p" d="M${x},${y}l9,-4l3,9l-8,5z"/>`;
      else specks += `<path class="speck-u" d="M${x},${y}l8,-5l5,8l-7,6z"/>`;
    }
    fill('.specks', specks);

    /* Land cover lies under every road, so the sheets are drawn in two passes. */
    const cover = /class="(f|w|g|p|d|u|park|sand|isle|s)"/;
    const pass = keep => SHEETS.map(({ at, art }) =>
      `<g class="sheet" transform="translate(${at}) scale(${kx} ${ky})">${art.match(/<path[^>]*>/g).filter(keep).join('')}</g>`).join('');
    fill('.sheets', pass(p => cover.test(p)) + pass(p => !cover.test(p)));

    fill('.peaks', PEAKS.map(([ox, oy, list]) => list.split(' ').map(pair => {
      const [x, y] = pair.split(',').map(Number);
      return `<path d="M${Math.round(ox + x * kx)},${Math.round(oy + y * ky)}m-8,0l8,-15l8,15z"/>`;
    }).join('')).join(''));

    const label = kind => ([text, x, y]) => `<text class="${kind}" x="${x}" y="${y}">${text}</text>`;
    fill('.labels', REGION.map(label('region')).join('') + EXITS.map(label('exit')).join('')
      + TOWNS.map(label('town')).join('') + CITIES.map(label('city')).join(''));
    fill('.pins', PINS.map(([x, y]) => `<use href="#pinShape" x="${x}" y="${y}"/>`).join(''));
  });

define('cf-app', `
  <style>
    :host { display: block; }
    main { display: flex; flex-direction: column; gap: 112px; padding: 40px 62px 44px 78px; }
    .columns { display: grid; grid-template-columns: repeat(2, minmax(0, 1fr)); gap: 48px; }
  </style>
  <cf-header></cf-header>
  <main>
    <cf-search></cf-search>
    <div class="columns">
      <cf-panel heading="Opportunities" icon="list">
        <cf-job-list>
          <cf-job heading="Westport Library Book Sale" pay="$0/hour" place="23 Jesup Road, Westport CT"></cf-job>
          <cf-job heading="Archiving and digitizing mid century photography of George Barkentin" pay="$0/hour" place="6 Richmondville Avenue, Westport, CT 06880"></cf-job>
          <cf-job heading="Social Media Manager for One Piece a a Time Art" pay="$10/hour" place="Westport CT"></cf-job>
        </cf-job-list>
      </cf-panel>
      <cf-panel heading="Job Map" icon="map"><cf-map></cf-map></cf-panel>
    </div>
  </main>`);
</script>
</body>
</html>
